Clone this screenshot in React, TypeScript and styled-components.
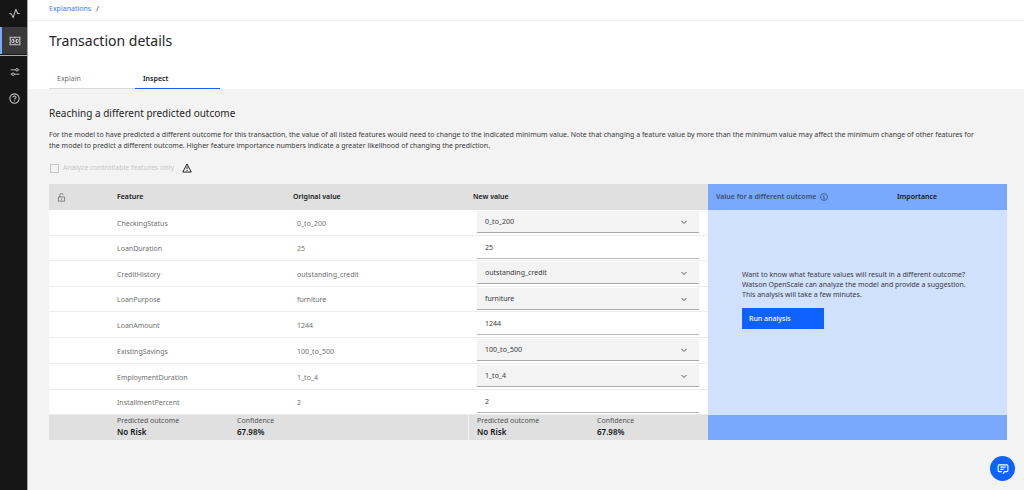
import React from 'react';
import styled, { createGlobalStyle } from 'styled-components';

const GlobalStyle = createGlobalStyle`
  *, *::before, *::after { box-sizing: border-box; }
  body {
    margin: 0;
    background: #f3f3f3;
    color: #262626;
    font-family: "Noto Sans", "Open Sans", sans-serif;
    font-size: 7px;
    line-height: 10px;
  }
  button, input, select { font: inherit; color: inherit; letter-spacing: inherit; }
`;

const Page = styled.div`
  display: flex;
  min-height: 100vh;
`;

const SideNav = styled.nav`
  display: flex;
  flex: none;
  flex-direction: column;
  width: 28px;
  background: #161616;
  border-right: 1px solid #a8a8a8;
`;

const NavLink = styled.a<{ $active?: boolean }>`
  display: flex;
  align-items: center;
  justify-content: center;
  height: 27px;
  padding-left: ${p => (p.$active ? 0 : 2)}px;
  color: #c6c6c6;
  background: ${p => (p.$active ? '#393939' : 'transparent')};
  border-left: ${p => (p.$active ? '2px solid #78a9ff' : '0')};
`;

const NavGroup = styled.div`
  display: flex;
  flex-direction: column;
  & + & {
    margin-top: 1px;
    padding-top: 2px;
    border-top: 1px solid #a8a8a8;
  }
`;

const Content = styled.div`
  flex: 1;
  min-width: 0;
`;

const Header = styled.header`
  background: #fff;
`;

const Breadcrumb = styled.nav`
  display: flex;
  gap: 5px;
  padding: 4px 21px 6px;
  border-bottom: 1px solid #f0f0f0;
  a { color: #4178f5; text-decoration: none; }
`;

const Title = styled.h1`
  margin: 0;
  padding: 10px 21px 18px;
  font-size: 14px;
  font-weight: 400;
  line-height: 20px;
`;

const Tabs = styled.div`
  display: flex;
  padding: 0 21px;
`;

const Tab = styled.button<{ $active?: boolean }>`
  width: ${p => (p.$active ? 85 : 86)}px;
  height: 20px;
  padding: 0 8px;
  border: 0;
  border-bottom: 1px solid ${p => (p.$active ? '#1f5ef5' : '#d8d8d8')};
  background: none;
  color: ${p => (p.$active ? '#161616' : '#6f6f6f')};
  font-weight: ${p => (p.$active ? 600 : 400)};
  text-align: left;
`;

const Main = styled.main`
  padding: 16px 17px 50px 21px;
`;

const SectionTitle = styled.h2`
  margin: 0 0 8px;
  font-size: 10px;
  font-weight: 400;
  line-height: 16px;
`;

const Description = styled.p`
  margin: 0 0 12px;
  color: #393939;
  line-height: 11px;
`;

const Option = styled.div`
  display: flex;
  align-items: center;
  gap: 8px;
  margin-bottom: 11px;
  padding-left: 1px;
  color: #161616;
  label { display: flex; align-items: center; gap: 4px; color: #c6c6c6; }
`;

const Checkbox = styled.input`
  width: 9px;
  height: 9px;
  margin: 0;
  appearance: none;
  border: 1px solid #c6c6c6;
`;

const DataTable = styled.table`
  width: 100%;
  table-layout: fixed;
  border-collapse: separate;
  border-spacing: 0;
  background: #fff;
  th, td { padding: 0; text-align: left; }
`;

const HeadCell = styled.th<{ $pad?: number; $blue?: boolean; $muted?: boolean }>`
  height: 26px;
  && { padding-left: ${p => p.$pad ?? 8}px; }
  background: ${p => (p.$blue ? '#78a9ff' : '#e0e0e0')};
  color: ${p => (!p.$muted ? '#161616' : p.$blue ? '#3c4d6b' : '#6f6f6f')};
  font-weight: 600;
  svg { vertical-align: middle; }
`;

const Row = styled.tr<{ $tall?: boolean }>`
  height: ${p => (p.$tall ? 26 : 25)}px;
`;

const Cell = styled.td<{ $pad?: number }>`
  && { padding: 2px 0 0 ${p => p.$pad ?? 8}px; }
  border-bottom: 1px solid #ececec;
  color: #6f6f6f;
`;

const FieldCell = styled.td`
  && { padding: 1px 9px 0; }
  border-bottom: 1px solid #ececec;
  vertical-align: top;
`;

const SelectWrap = styled.div`
  position: relative;
  svg { position: absolute; top: 7px; right: 11px; pointer-events: none; }
`;

const Select = styled.select`
  display: block;
  width: 100%;
  height: 22px;
  padding: 0 24px 0 8px;
  appearance: none;
  border: 0;
  border-bottom: 1px solid #a8a8a8;
  border-radius: 0;
  background: #f3f3f3;
  color: #393939;
`;

const TextInput = styled.input`
  display: block;
  width: 100%;
  height: 22px;
  padding: 0 8px;
  border: 0;
  border-bottom: 1px solid #b8b8b8;
  border-radius: 0;
  background: #fff;
  color: #393939;
`;

const Suggestion = styled.td`
  && { padding: 0 32px 26px 34px; }
  background: #d0e2ff;
  color: #393939;
  p { margin: 0 0 8px; }
`;

const PrimaryButton = styled.button`
  width: 82px;
  height: 21px;
  padding: 0 7px;
  border: 0;
  background: #0f62fe;
  color: #fff;
  font-weight: 500;
  text-align: left;
`;

const FootCell = styled.td<{ $blue?: boolean; $divided?: boolean }>`
  height: 25px;
  && { padding-left: 8px; }
  background: ${p => (p.$blue ? '#78a9ff' : '#e0e0e0')};
  border-left: ${p => (p.$divided ? '1px solid #f3f3f3' : '0')};
  vertical-align: top;
`;

const Results = styled.dl`
  display: flex;
  margin: 1px 0 0;
  div { flex: none; width: 120px; }
  div:last-child { width: 100px; }
  dt { color: #525252; }
  dd { margin: 0; color: #161616; font-size: 8px; font-weight: 600; line-height: 12px; }
`;

const ChatButton = styled.button`
  position: fixed;
  right: 9px;
  bottom: 9px;
  display: grid;
  width: 25px;
  height: 25px;
  padding: 0;
  place-items: center;
  border: 0;
  border-radius: 50%;
  background: #0f62fe;
  color: #fff;
`;

type IconProps = { size?: number; label?: string; weight?: number; children: React.ReactNode };

const Icon = ({ size = 10, weight = 2, label, children }: IconProps) => (
  <svg
    width={size}
    height={size}
    viewBox="0 0 32 32"
    fill="none"
    stroke="currentColor"
    strokeWidth={weight}
    role={label ? 'img' : undefined}
    aria-label={label}
    aria-hidden={label ? undefined : true}
  >
    {children}
  </svg>
);

const ActivityIcon = () => (
  <Icon size={11} weight={3}><path d="M1 17h6l5 11L20 4l5 12h6" strokeLinejoin="round" /></Icon>
);

const TicketIcon = () => (
  <Icon size={12} weight={3}>
    <path d="M3 6h26v7a3 3 0 0 0 0 6v7H3v-7a3 3 0 0 0 0-6z" />
    <path d="M16 6v4M16 14v4M16 22v4M8 12h4v8H8M24 12h-4v8h4" />
  </Icon>
);

const SettingsIcon = () => (
  <Icon size={10} weight={3}>
    <path d="M2 9h16M26 9h4M2 23h4M14 23h16" />
    <circle cx="22" cy="9" r="4" />
    <circle cx="10" cy="23" r="4" />
  </Icon>
);

const HelpIcon = () => (
  <Icon size={11} weight={3}>
    <circle cx="16" cy="16" r="13.5" />
    <path d="M11.5 13c0-3 2-4 4.500-4s4.500 1.500 4.500 4-4.500 2.500-4.500 6" />
    <path d="M16 21.500v3" />
  </Icon>
);

const WarningIcon = () => (
  <Icon size={10} weight={3} label="Warning">
    <path d="M16 3 29.500 29H2.500z" strokeLinejoin="round" />
    <path d="M16 11v9M16 22.500v3" />
  </Icon>
);

const UnlockIcon = () => (
  <Icon size={9} weight={3} label="Unlocked">
    <path d="M5 14h22v15H5zM10 14V8a6 6 0 0 1 12-1M16 19v5" />
  </Icon>
);

const InfoIcon = () => (
  <Icon size={8} weight={3} label="More information">
    <circle cx="16" cy="16" r="14" />
    <path d="M16 7v4M12.500 14H16v9M12 23h8" />
  </Icon>
);

const ChevronIcon = () => (
  <Icon size={8} weight={3}><path d="m6 12 10 10 10-10" /></Icon>
);

const ChatIcon = () => (
  <Icon size={12} weight={3}>
    <path d="M16 29l4-6h6a3 3 0 0 0 3-3V8a3 3 0 0 0-3-3H6a3 3 0 0 0-3 3v12a3 3 0 0 0 3 3h7M9 11h14M9 17h9" />
  </Icon>
);

const features = [
  { name: 'CheckingStatus', value: '0_to_200', choice: true },
  { name: 'LoanDuration', value: '25' },
  { name: 'CreditHistory', value: 'outstanding_credit', choice: true },
  { name: 'LoanPurpose', value: 'furniture', choice: true },
  { name: 'LoanAmount', value: '1244' },
  { name: 'ExistingSavings', value: '100_to_500', choice: true },
  { name: 'EmploymentDuration', value: '1_to_4', choice: true },
  { name: 'InstallmentPercent', value: '2' },
];

const columnWidths = [60, 176, 183, 240, 181, 118];

const Prediction = () => (
  <Results>
    <div><dt>Predicted outcome</dt><dd>No Risk</dd></div>
    <div><dt>Confidence</dt><dd>67.98%</dd></div>
  </Results>
);

export default function App() {
  return (
    <Page>
      <GlobalStyle />
      <SideNav aria-label="Main">
        <NavGroup>
          <NavLink href="#monitors" aria-label="Insights"><ActivityIcon /></NavLink>
          <NavLink href="#explanations" aria-label="Explanations" $active><TicketIcon /></NavLink>
        </NavGroup>
        <NavGroup>
          <NavLink href="#configure" aria-label="Configure"><SettingsIcon /></NavLink>
          <NavLink href="#help" aria-label="Help"><HelpIcon /></NavLink>
        </NavGroup>
      </SideNav>
      <Content>
        <Header>
          <Breadcrumb aria-label="Breadcrumb">
            <a href="#explanations">Explanations</a>
            <span>/</span>
          </Breadcrumb>
          <Title>Transaction details</Title>
          <Tabs role="tablist">
            <Tab role="tab" aria-selected={false}>Explain</Tab>
            <Tab role="tab" aria-selected $active>Inspect</Tab>
          </Tabs>
        </Header>
        <Main>
          <SectionTitle>Reaching a different predicted outcome</SectionTitle>
          <Description>
            For the model to have predicted a different outcome for this transaction, the value of all listed features would need to change to the indicated minimum value. Note that changing a feature value by more than the minimum value may affect the minimum change of other features for
            <br />
            the model to predict a different outcome. Higher feature importance numbers indicate a greater likelihood of changing the prediction.
          </Description>
          <Option>
            <label><Checkbox type="checkbox" disabled />Analyze controllable features only</label>
            <WarningIcon />
          </Option>
          <DataTable>
            <colgroup>
              {columnWidths.map((width, i) => <col key={i} width={width} />)}
            </colgroup>
            <thead>
              <tr>
                <HeadCell $muted><UnlockIcon /></HeadCell>
                <HeadCell>Feature</HeadCell>
                <HeadCell>Original value</HeadCell>
                <HeadCell $pad={5}>New value</HeadCell>
                <HeadCell $blue $muted>Value for a different outcome &nbsp;<InfoIcon /></HeadCell>
                <HeadCell $blue>Importance</HeadCell>
              </tr>
            </thead>
            <tbody>
              {features.map((f, i) => (
                <Row key={f.name} $tall={i % 2 === 0 || i === 5}>
                  <Cell />
                  <Cell>{f.name}</Cell>
                  <Cell $pad={12}>{f.value}</Cell>
                  <FieldCell>
                    {f.choice ? (
                      <SelectWrap>
                        <Select aria-label={f.name} defaultValue={f.value}><option>{f.value}</option></Select>
                        <ChevronIcon />
                      </SelectWrap>
                    ) : (
                      <TextInput aria-label={f.name} defaultValue={f.value} />
                    )}
                  </FieldCell>
                  {i === 0 && (
                    <Suggestion colSpan={2} rowSpan={features.length}>
                      <p>
                        Want to know what feature values will result in a different outcome?
                        <br />
                        Watson OpenScale can analyze the model and provide a suggestion.
                        <br />
                        This analysis will take a few minutes.
                      </p>
                      <PrimaryButton>Run analysis</PrimaryButton>
                    </Suggestion>
                  )}
                </Row>
              ))}
            </tbody>
            <tfoot>
              <tr>
                <FootCell />
                <FootCell colSpan={2}><Prediction /></FootCell>
                <FootCell $divided><Prediction /></FootCell>
                <FootCell colSpan={2} $blue />
              </tr>
            </tfoot>
          </DataTable>
        </Main>
      </Content>
      <ChatButton aria-label="Open chat"><ChatIcon /></ChatButton>
    </Page>
  );
}
